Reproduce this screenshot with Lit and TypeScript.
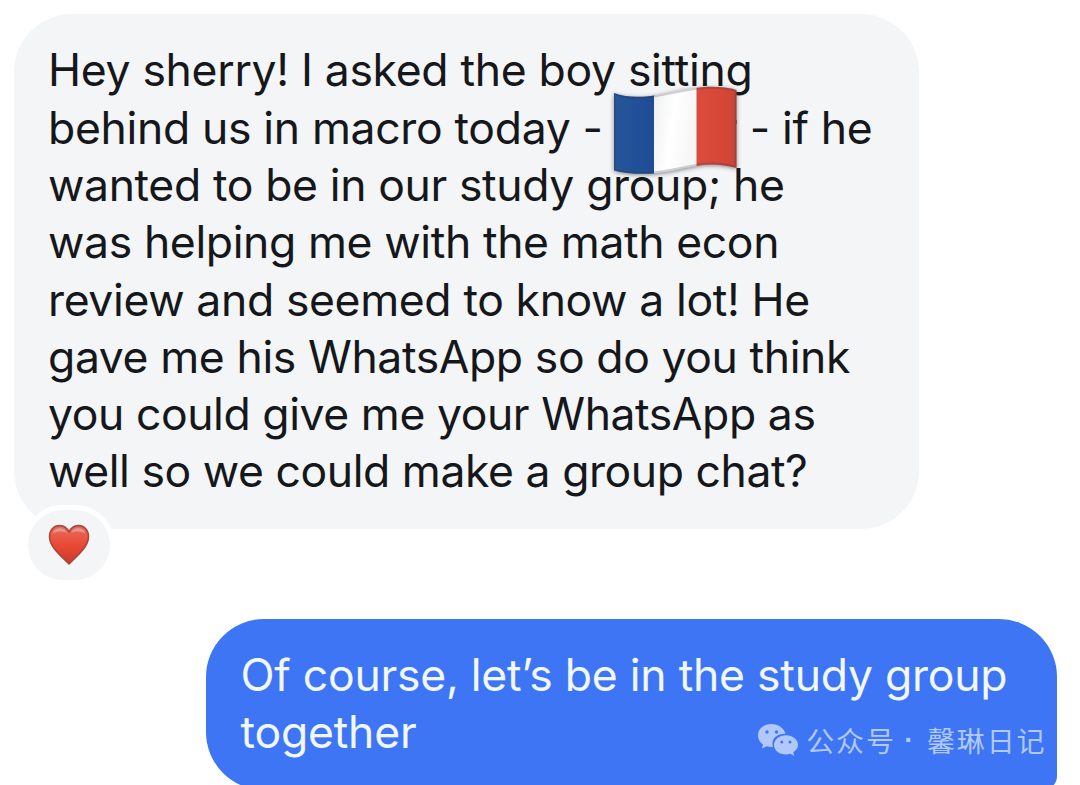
import { LitElement, html, css } from 'lit';
import { customElement, property } from 'lit/decorators.js';

interface Line {
  text: string;
  tracking: number;
  flag?: boolean;
  rest?: string;
}

const received: Line[] = [
  { text: 'Hey sherry! I asked the boy sitting', tracking: -0.31 },
  { text: 'behind us in macro today -', tracking: -0.33, flag: true, rest: '- if he' },
  { text: 'wanted to be in our study group; he', tracking: -0.37 },
  { text: 'was helping me with the math econ', tracking: -0.38 },
  { text: 'review and seemed to know a lot! He', tracking: -0.37 },
  { text: 'gave me his WhatsApp so do you think', tracking: -0.4 },
  { text: 'you could give me your WhatsApp as', tracking: -0.43 },
  { text: 'well so we could make a group chat?', tracking: -0.44 },
];

const sent: Line[] = [
  { text: 'Of course, let’s be in the study group', tracking: -0.24 },
  { text: 'together', tracking: -0.2 },
];

@customElement('flag-sticker')
export class FlagSticker extends LitElement {
  static styles = css`
    :host {
      display: block;
      width: 136px;
      height: 100px;
    }
    svg {
      display: block;
      filter: drop-shadow(0 1px 2px rgba(40, 40, 50, 0.55));
    }
  `;

  render() {
    return html`
      <svg width="136" height="100" viewBox="0 0 136 100">
        <defs>
          <clipPath id="wave">
            <path
              d="M6 11C18 15.500 32 15.500 47 13.500C64 10 78 6.500 96 5C108 4.300 120 5.500 128.500 8V86C116 82.500 102 81.500 88 84C71 87 58 91 42 91.700C28 92.300 16 91.300 6 88.500Z"
            />
          </clipPath>
          <linearGradient id="blue" x1="0" x2="1">
            <stop offset="0" stop-color="#2b5797" />
            <stop offset="0.5" stop-color="#225199" />
            <stop offset="1" stop-color="#1f4d95" />
          </linearGradient>
          <linearGradient id="white" x1="0" x2="1" y1="0" y2="0.3">
            <stop offset="0" stop-color="#eeeff0" />
            <stop offset="0.5" stop-color="#ffffff" />
            <stop offset="1" stop-color="#f6f6f7" />
          </linearGradient>
          <linearGradient id="red" x1="0" x2="1">
            <stop offset="0" stop-color="#dc4c3c" />
            <stop offset="0.6" stop-color="#d64637" />
            <stop offset="1" stop-color="#bd4238" />
          </linearGradient>
        </defs>
        <g clip-path="url(#wave)">
          <rect width="47" height="100" fill="url(#blue)" />
          <rect x="46" width="43" height="100" fill="url(#white)" />
          <rect x="88.500" width="47" height="100" fill="url(#red)" />
          <path
            d="M6 11C18 15.500 32 15.500 47 13.500C64 10 78 6.500 96 5C108 4.300 120 5.500 128.500 8V86C116 82.500 102 81.500 88 84C71 87 58 91 42 91.700C28 92.300 16 91.300 6 88.500Z"
            fill="none"
            stroke="#30343c"
            stroke-opacity="0.22"
            stroke-width="4"
          />
        </g>
      </svg>
    `;
  }
}

@customElement('message-bubble')
export class MessageBubble extends LitElement {
  @property({ attribute: false })
  lines: Line[] = [];

  @property({ type: String })
  variant: 'received' | 'sent' = 'received';

  static styles = css`
    :host {
      display: block;
    }
    .bubble {
      box-sizing: border-box;
      font-family: Inter, 'Liberation Sans', sans-serif;
      font-size: 44.5px;
      line-height: 57.3px;
      white-space: nowrap;
    }
    .received {
      width: 905px;
      height: 515px;
      padding: 28.4px 34px 0;
      color: #15171b;
      background: #f3f5f7;
      border-radius: 58px;
    }
    .sent {
      width: 851px;
      height: 171px;
      padding: 28px 34px 0 34.5px;
      color: #f1f7ff;
      background: #3d75f5;
      border-radius: 58px 58px 14px 58px;
    }
    .line {
      display: flex;
      height: 57.3px;
    }
    .gap {
      position: relative;
      width: 147px;
    }
    .name {
      position: absolute;
      right: 12.5px;
      top: 0;
    }
    flag-sticker {
      position: absolute;
      left: 5px;
      top: -18px;
    }
  `;

  render() {
    return html`
      <div class="bubble ${this.variant}">
        ${this.lines.map(
          (line) => html`
            <div class="line" style="letter-spacing: ${line.tracking}px">
              <span>${line.text}</span>
              ${line.flag
                ? html`<span class="gap"><span class="name">r</span><flag-sticker></flag-sticker></span>`
                : ''}
              ${line.rest ? html`<span>${line.rest}</span>` : ''}
            </div>
          `
        )}
      </div>
    `;
  }
}

@customElement('heart-reaction')
export class HeartReaction extends LitElement {
  static styles = css`
    :host {
      display: flex;
      align-items: center;
      justify-content: center;
      width: 82px;
      height: 70px;
      border: 5px solid #fff;
      border-radius: 40px;
      background: #f3f5f7;
    }
    svg {
      display: block;
    }
  `;

  render() {
    return html`
      <svg width="42" height="42" viewBox="0 0 42 42">
        <defs>
          <linearGradient id="fill" x1="0" x2="0" y1="0" y2="1">
            <stop offset="0" stop-color="#d9705f" />
            <stop offset="0.2" stop-color="#e8604f" />
            <stop offset="0.5" stop-color="#ea4a36" />
            <stop offset="1" stop-color="#c93a2a" />
          </linearGradient>
        </defs>
        <path
          d="M21 8C18.800 3.300 15.600 1.500 11.700 1.500C5.500 1.500 1.500 6.200 1.500 12.500C1.500 22.500 11.500 30.500 21 40C30.500 30.500 40.500 22.500 40.500 12.500C40.500 6.200 36.500 1.500 30.300 1.500C26.400 1.500 23.200 3.300 21 8Z"
          fill="url(#fill)"
          stroke="#a8453c"
          stroke-width="1.500"
          stroke-linejoin="round"
        />
        <path
          d="M4.500 9.500C6 5.500 9 4.300 12 4.300C15.500 4.300 17.800 6.300 19 9C15 7 9 7 4.500 9.500ZM23 9C24.200 6.300 26.500 4.300 30 4.300C33 4.300 36 5.500 37.500 9.500C33 7 27 7 23 9Z"
          fill="#fff"
          fill-opacity="0.3"
        />
      </svg>
    `;
  }
}

@customElement('account-mark')
export class AccountMark extends LitElement {
  static styles = css`
    :host {
      display: flex;
      align-items: center;
      gap: 7px;
      color: #b1c8fb;
      font-family: 'Noto Sans CJK SC', sans-serif;
      font-size: 28px;
      line-height: 40px;
      letter-spacing: 1.9px;
      white-space: nowrap;
    }
    svg {
      display: block;
    }
    .label {
      display: flex;
    }
    .dot {
      box-sizing: border-box;
      width: 31px;
      padding-right: 5px;
      text-align: center;
      font-family: 'Liberation Sans', sans-serif;
      font-weight: 700;
      letter-spacing: 0;
    }
  `;

  render() {
    return html`
      <svg width="42" height="34" viewBox="0 0 42 34">
        <path
          d="M14.500 1C6.800 1 1 6 1 12.500C1 16.200 2.900 19.300 6 21.500L5 25.500L9.600 23.200C11.200 23.700 13 24 14.700 24H16C13.500 16 20 10.500 28.500 10.800C27 5 21.300 1 14.500 1Z"
          fill="currentColor"
        />
        <path
          d="M29 12.300C22.300 12.300 17 16.600 17 22C17 27.400 22.300 31.500 29 31.500C30.500 31.500 32 31.200 33.300 30.800L37.300 33L36.300 29.300C39.200 27.500 41 25 41 22C41 16.600 35.700 12.300 29 12.300Z"
          fill="currentColor"
        />
        <g fill="#3d75f5">
          <circle cx="10" cy="9" r="1.700" />
          <circle cx="19.500" cy="9" r="1.700" />
          <circle cx="24.800" cy="19" r="1.500" />
          <circle cx="33" cy="19" r="1.500" />
        </g>
      </svg>
      <div class="label"><span>公众号</span><span class="dot">·</span><span>馨琳日记</span></div>
    `;
  }
}

@customElement('app-root')
export class AppRoot extends LitElement {
  static styles = css`
    :host {
      display: block;
      height: 785px;
      overflow: hidden;
      background: #fff;
    }
    .thread {
      display: flex;
      flex-direction: column;
      gap: 90px;
      padding: 14px 23px 0 14px;
    }
    .message {
      position: relative;
    }
    .left {
      align-self: flex-start;
    }
    .right {
      align-self: flex-end;
    }
    heart-reaction {
      position: absolute;
      left: 9px;
      top: 490.5px;
    }
    account-mark {
      position: absolute;
      right: 10.5px;
      top: 101px;
    }
  `;

  render() {
    return html`
      <div class="thread">
        <div class="message left">
          <message-bubble variant="received" .lines=${received}></message-bubble>
          <heart-reaction></heart-reaction>
        </div>
        <div class="message right">
          <message-bubble variant="sent" .lines=${sent}></message-bubble>
          <account-mark></account-mark>
        </div>
      </div>
    `;
  }
}
